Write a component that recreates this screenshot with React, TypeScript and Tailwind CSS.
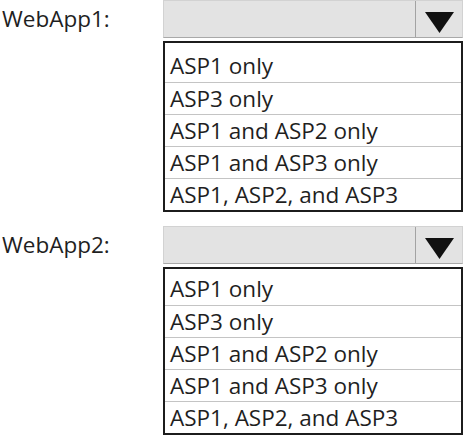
const options = [
  'ASP1 only',
  'ASP3 only',
  'ASP1 and ASP2 only',
  'ASP1 and ASP3 only',
  'ASP1, ASP2, and ASP3',
]

function Caret() {
  return (
    <svg viewBox="0 0 29 21" width="29" height="21" aria-hidden="true">
      <path d="M0 0h29L14.5 21z" fill="#111" />
    </svg>
  )
}

/** Label + fake dropdown with its option list shown open underneath. */
function AnswerBox({ label, listPad }: { label: string; listPad: string }) {
  return (
    <div>
      <div className="flex h-[38px] items-center">
        <span className="w-[163px] pl-[2px] leading-none">{label}</span>
        <div className="flex h-[38px] w-[300px] border border-[#d2d2d2] border-b-[#a9a9a9] bg-[#e3e3e3]">
          <div className="flex-1 border-r border-[#a3a3a3]" />
          <div className="flex w-[46px] items-start justify-center pt-[11px]">
            <Caret />
          </div>
        </div>
      </div>
      <ul className={`mt-[3px] ml-[163px] w-[300px] border-2 border-[#1c1c1c] ${listPad}`}>
        {options.map((opt, i) => (
          <li
            key={opt}
            className={`h-8 pl-[5px] leading-[31px] ${i > 0 ? 'border-t-[1.5px] border-[#c4c4c4]' : ''}`}
          >
            {opt}
          </li>
        ))}
      </ul>
    </div>
  )
}

export default function App() {
  return (
    <div className="h-[437px] w-[464px] overflow-hidden bg-white font-['Open_Sans',sans-serif] text-[22.5px] text-[#1f1f1f]">
      <AnswerBox label="WebApp1:" listPad="pt-[7px]" />
      <div className="mt-[14px]">
        <AnswerBox label="WebApp2:" listPad="pt-[4px]" />
      </div>
    </div>
  )
}
